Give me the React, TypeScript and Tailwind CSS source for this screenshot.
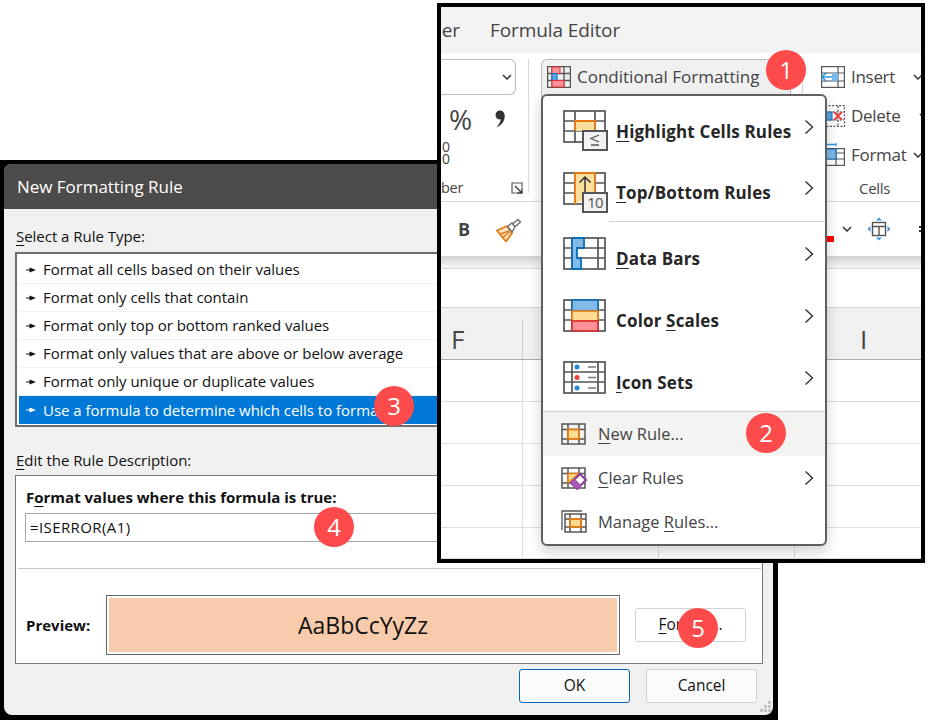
import React from "react";

const GRAY = "#555";

const Key = ({ children }: { children: React.ReactNode }) => (
  <span className="underline decoration-1 underline-offset-[3px]">{children}</span>
);

const Badge = ({ n, className }: { n: number; className: string }) => (
  <div
    className={`absolute flex h-10 w-10 items-center justify-center rounded-full bg-[#fd4a4a] text-[24px] leading-none text-white ${className}`}
  >
    {n}
  </div>
);

const Chevron = () => (
  <svg width="10" height="16" viewBox="0 0 10 16" className="shrink-0">
    <path d="M1.500 1.500 8.500 8 1.500 14.500" fill="none" stroke="#333" strokeWidth="1.400" />
  </svg>
);

const SmallDown = () => (
  <svg width="10" height="6" viewBox="0 0 10 6" className="shrink-0">
    <path d="M1 1 5 5 9 1" fill="none" stroke="#333" strokeWidth="1.500" />
  </svg>
);

const Pointer = ({ light }: { light?: boolean }) => (
  <svg width="10" height="6" viewBox="0 0 10 6" className="mr-[7px] shrink-0">
    <path d="M0 3H5" stroke={light ? "#fff" : "#111"} strokeWidth="1" />
    <path d="M3.500 0.500 10 3 3.500 5.500Z" fill={light ? "#fff" : "#111"} />
  </svg>
);

// 42x32 sheet grid used by the large menu icons
const BigGrid = ({ v = [12, 32], h = [11, 21] }: { v?: number[]; h?: number[] }) => (
  <g fill="none" stroke={GRAY} strokeWidth="1.700">
    <rect x="1" y="1" width="41" height="31" />
    {v.map((x) => (
      <path key={x} d={`M${x} 1V32`} />
    ))}
    {h.map((y) => (
      <path key={y} d={`M1 ${y}H42`} />
    ))}
  </g>
);

const HighlightIcon = () => (
  <svg width="46" height="42" viewBox="0 0 46 42" className="mt-[9px] block">
    <BigGrid />
    <path d="M12 21V11H32V21" fill="#fbdd9c" stroke="#e57a14" strokeWidth="1.800" />
    <rect x="20" y="21" width="24" height="19" fill="#f2f2f2" stroke={GRAY} strokeWidth="2" />
    <path d="M36 25 28 28.500 36 32M28 35H36" fill="none" stroke={GRAY} strokeWidth="1.300" />
  </svg>
);

const TopIcon = () => (
  <svg width="46" height="42" viewBox="0 0 46 42" className="mt-[9px] block">
    <BigGrid />
    <path d="M12 32V1H32V22" fill="#fbdd9c" stroke="#e57a14" strokeWidth="1.800" />
    <path d="M22 21V5M16.500 10.500 22 5 27.500 10.500" fill="none" stroke="#333" strokeWidth="1.500" />
    <rect x="20" y="21" width="24" height="19" fill="#f2f2f2" stroke={GRAY} strokeWidth="2" />
    <text x="32" y="36" textAnchor="middle" fontSize="15" letterSpacing="-0.8" fill="#555" fontFamily="'Open Sans', sans-serif">
      10
    </text>
  </svg>
);

const DataBarsIcon = () => (
  <svg width="46" height="34" viewBox="0 0 46 34" className="block">
    <BigGrid v={[9, 35]} />
    <path d="M9 1H21V11H14V21H18V32H9Z" fill="#82bbea" stroke="#0c6cb5" strokeWidth="1.800" />
  </svg>
);

const ColorScalesIcon = () => (
  <svg width="46" height="34" viewBox="0 0 46 34" className="block">
    <BigGrid v={[9, 35]} />
    <rect x="9" y="1" width="26" height="11" fill="#82bbea" stroke="#0c6cb5" strokeWidth="1.600" />
    <rect x="9" y="12" width="26" height="10" fill="#fbdc92" stroke="#e57a14" strokeWidth="1.600" />
    <rect x="9" y="22" width="26" height="10" fill="#fc919a" stroke="#d92c2c" strokeWidth="1.600" />
  </svg>
);

const IconSetsIcon = () => (
  <svg width="46" height="34" viewBox="0 0 46 34" className="block">
    <BigGrid v={[9, 35]} />
    <circle cx="14" cy="6" r="2.500" fill="#1c8ad8" />
    <circle cx="14" cy="16.500" r="2.500" fill="#f04040" />
    <circle cx="14" cy="27" r="2.500" fill="#1c8ad8" />
    <path d="M25 6H33M25 16.500H33M25 27H33" stroke="#777" strokeWidth="1.400" />
  </svg>
);

const SmallGrid = () => (
  <g fill="none" stroke={GRAY} strokeWidth="1.500">
    <rect x="1" y="1" width="23" height="20" />
    <path d="M7 1V21M18 1V21M1 6.500H24M1 16H24" />
  </g>
);

const NewRuleIcon = () => (
  <svg width="26" height="23" viewBox="0 0 26 23" className="block">
    <SmallGrid />
    <rect x="7" y="6.500" width="11" height="9.500" fill="#fbdc92" stroke="#e57a14" strokeWidth="1.800" />
  </svg>
);

const ClearRulesIcon = () => (
  <svg width="26" height="23" viewBox="0 0 26 23" className="block">
    <SmallGrid />
    <path d="M7 16V6.500H18L7 16Z" fill="#fbdc92" stroke="#e57a14" strokeWidth="1.400" />
    <path d="M10 16 19 7 25 13 16 22Z" fill="#fff" stroke="#8e3a9d" strokeWidth="2" />
    <path d="M10 16 14 12 20 18 16 22Z" fill="#a95ab6" />
  </svg>
);

const ManageRulesIcon = () => (
  <svg width="26" height="24" viewBox="0 0 26 24" className="block">
    <path d="M1 20V1H21" fill="none" stroke={GRAY} strokeWidth="1.300" />
    <g fill="none" stroke={GRAY} strokeWidth="1.500">
      <rect x="4" y="4" width="21" height="18" />
      <path d="M9 4V22M20 4V22M4 9H25M4 17H25" />
    </g>
    <rect x="9" y="9" width="11" height="8" fill="#fbdc92" stroke="#e57a14" strokeWidth="1.800" />
  </svg>
);

const ConditionalIcon = () => (
  <svg width="24" height="22" viewBox="0 0 24 22" className="block shrink-0">
    <g fill="none" stroke={GRAY} strokeWidth="1.300">
      <rect x="0.600" y="0.600" width="22.800" height="20.800" />
      <path d="M5 1V21M17 1V21M1 7.500H23M1 14.500H23" />
    </g>
    <rect x="5" y="1" width="8" height="6.500" fill="#fc919a" stroke="#e03030" strokeWidth="1" />
    <rect x="5" y="7.500" width="5" height="7" fill="#5aa6e6" stroke="#0c6cb5" strokeWidth="1" />
    <rect x="5" y="14.500" width="12" height="6.500" fill="#fc919a" stroke="#e03030" strokeWidth="1" />
  </svg>
);

const InsertIcon = () => (
  <svg width="24" height="22" viewBox="0 0 24 22" className="block shrink-0">
    <g fill="none" stroke={GRAY} strokeWidth="1.200">
      <rect x="0.600" y="0.600" width="22.800" height="20.800" />
      <path d="M17 1V21M1 7H23M1 15H23" />
    </g>
    <rect x="11" y="7" width="6" height="8" fill="#7cb8e8" />
    <path d="M11 11H1.500M5.500 6.500 1 11 5.500 15.500" fill="none" stroke="#2d9ae0" strokeWidth="1.600" />
  </svg>
);

const DeleteIcon = () => (
  <svg width="24" height="22" viewBox="0 0 24 22" className="block shrink-0">
    <g fill="none" stroke={GRAY} strokeWidth="1.200" strokeDasharray="2 1.500">
      <rect x="0.600" y="0.600" width="22.800" height="20.800" />
      <path d="M17 1V21M1 7H23M1 15H23" />
    </g>
    <rect x="3" y="7" width="8" height="8" fill="#5aa6e6" stroke="#0c6cb5" />
    <path d="M13 7 21 15M21 7 13 15" stroke="#f04040" strokeWidth="1.800" />
  </svg>
);

const FormatIcon = () => (
  <svg width="24" height="23" viewBox="0 0 24 23" className="block shrink-0">
    <path d="M1 1.500H15M15 0V3" fill="none" stroke="#2d9ae0" strokeWidth="1.300" />
    <g fill="none" stroke={GRAY} strokeWidth="1.200">
      <rect x="0.600" y="5.600" width="22.800" height="16.800" />
      <path d="M15 5V22M1 10H23M1 16H23" />
    </g>
    <rect x="1" y="6" width="14" height="10" fill="#7cb8e8" stroke="#0c6cb5" />
  </svg>
);

const BrushIcon = () => (
  <svg width="25" height="23" viewBox="0 0 25 23" className="block">
    <path d="M1 11.500 11 7 16 14 10 22.500Z" fill="#fbe3c4" stroke="#e57a14" strokeWidth="1.800" />
    <path d="M4 15 13 12M6.500 19 13.500 13" stroke="#e57a14" strokeWidth="1.400" />
    <path d="M11.500 7.500 16 4 19 8 16 13ZM16.500 5 22 0.500 24.500 3 18.500 8" fill="#fff" stroke="#666" strokeWidth="1.300" />
  </svg>
);

const CommaIcon = () => (
  <svg width="12" height="18" viewBox="0 0 12 18" className="block">
    <circle cx="5" cy="5" r="4.500" fill="#333" />
    <path d="M9.500 5C10.500 10 7 15 1.500 17.500 5 13 6 10.500 6 8Z" fill="#333" />
  </svg>
);

const LauncherIcon = () => (
  <svg width="12" height="12" viewBox="0 0 12 12" className="block">
    <path d="M11 5.500V1H1V11H5.500" fill="none" stroke="#555" strokeWidth="1.200" />
    <path d="M4 4 11 11M11 6V11H6" fill="none" stroke="#333" strokeWidth="1.300" />
  </svg>
);

const BordersIcon = () => (
  <svg width="24" height="24" viewBox="0 0 24 24" className="block">
    <g fill="none" stroke="#555" strokeWidth="1.400">
      <rect x="5.500" y="5.500" width="13" height="13" />
      <path d="M5 9.500H19M12 9.500V18" />
    </g>
    <path d="M12 0.500 9 3.500H15ZM12 23.500 9 20.500H15ZM0.500 12 3.500 9V15ZM23.500 12 20.500 9V15Z" fill="#3d94d8" />
  </svg>
);

const CellRow = ({ icon, label, width }: { icon: React.ReactNode; label: string; width: string }) => (
  <div className="flex h-[39px] items-center gap-[6px]">
    {icon}
    <span className={`shrink-0 ${width}`}>{label}</span>
    <SmallDown />
  </div>
);

const MenuBig = ({ icon, children, first }: { icon: React.ReactNode; children: React.ReactNode; first?: boolean }) => (
  <div className={`flex items-center pl-5 pr-[11px] ${first ? "h-[61px]" : "h-[62px]"}`}>
    <div className="w-[53px] shrink-0">{icon}</div>
    <div className="flex-1 pt-[9px] text-[17px] font-bold leading-none tracking-[0.15px] text-[#262626]">{children}</div>
    <Chevron />
  </div>
);

const MenuSmall = ({
  icon,
  children,
  hover,
  more,
}: {
  icon: React.ReactNode;
  children: React.ReactNode;
  hover?: boolean;
  more?: boolean;
}) => (
  <div className={`flex h-11 items-center pl-[18px] pr-[11px] text-[16.500px] text-[#444] ${hover ? "bg-[#f3f4f2]" : ""}`}>
    <div className="w-[37px] shrink-0">{icon}</div>
    <div className="flex-1 pt-px">{children}</div>
    {more && <Chevron />}
  </div>
);

const ListItem = ({ text, selected }: { text: string; selected?: boolean }) => (
  <div
    className={`flex h-7 items-center whitespace-nowrap pl-[7px] ${
      selected ? "bg-[#0078d7] text-white" : "border-b border-[#f0f0f0]"
    }`}
  >
    <Pointer light={selected} />
    {text}
  </div>
);

const DialogButton = ({ children, primary }: { children: React.ReactNode; primary?: boolean }) => (
  <div
    className={`flex h-[34px] w-[111px] items-center justify-center rounded-[3px] border bg-[#fbfbfb] text-[15.500px] ${
      primary ? "border-[#0067c0]" : "border-[#d0d0d0]"
    }`}
  >
    {children}
  </div>
);

const Dialog = () => (
  <div className="absolute left-0 top-[160px] h-[560px] w-[778px] bg-black pb-[5px] pl-1 pr-[5px] pt-1">
    <div className="flex h-full flex-col overflow-hidden rounded-lg bg-[#f0f0f0] text-[15px] tracking-[-0.03px] text-[#111]">
      <div className="flex h-[45px] shrink-0 items-center bg-[#4d4b49] pl-[13px] text-[17px] text-white">
        New Formatting Rule
      </div>
      <div className="flex flex-1 flex-col pl-[11px] pr-[10px]">
        <div className="mt-[17px] h-5 pl-px leading-5">
          <Key>S</Key>elect a Rule Type:
        </div>
        <div className="mt-[6px] h-[175px] border-2 border-[#6d6d6d] bg-white p-[2px]">
          <ListItem text="Format all cells based on their values" />
          <ListItem text="Format only cells that contain" />
          <ListItem text="Format only top or bottom ranked values" />
          <ListItem text="Format only values that are above or below average" />
          <ListItem text="Format only unique or duplicate values" />
          <ListItem text="Use a formula to determine which cells to format" selected />
        </div>
        <div className="mt-[23px] h-5 pl-px leading-5">
          <Key>E</Key>dit the Rule Description:
        </div>
        <div className="mt-[5px] h-[189px] border border-[#777] bg-white">
          <div className="ml-[10px] mt-[11px] h-5 font-bold leading-5 tracking-normal">
            F<Key>o</Key>rmat values where this formula is true:
          </div>
          <div className="ml-[9px] mr-4 mt-[6px] flex h-[29px] items-center border border-[#a8a8a8] pl-1 tracking-[0.4px]">
            =ISERROR(A1)
          </div>
          <div className="ml-[2px] mr-px mt-[26px] border-t border-[#c8c8c8]" />
          <div className="mt-[26px] flex items-center">
            <div className="w-[90px] pl-[10px] font-bold tracking-normal">Preview:</div>
            <div className="flex h-[60px] w-[514px] items-center justify-center border border-[#666] bg-[#f7cbac] text-[23px] tracking-normal shadow-[inset_0_0_0_2px_#fff]">
              AaBbCcYyZz
            </div>
            <div className="ml-[15px] flex h-[34px] w-[111px] items-center justify-center rounded-[3px] border border-[#d0d0d0] bg-white text-[15.500px]">
              <Key>F</Key>ormat...
            </div>
          </div>
        </div>
        <div className="mt-[5px] flex justify-end gap-4 pr-[6px]">
          <DialogButton primary>OK</DialogButton>
          <DialogButton>Cancel</DialogButton>
        </div>
      </div>
    </div>
    {/* resize grip */}
    <svg width="12" height="12" viewBox="0 0 12 12" className="absolute bottom-[7px] right-[6px]">
      <path d="M8 0h3v3H8zM4 4h3v3H4zM8 4h3v3H8zM0 8h3v3H0zM4 8h3v3H4zM8 8h3v3H8z" fill="#c4c4c4" />
    </svg>
  </div>
);

const ExcelWindow = () => (
  <div className="absolute left-[437px] top-[3px] h-[560px] w-[488px] border-4 border-black bg-white">
    <div className="flex h-full flex-col overflow-hidden text-[#444]">
      {/* tabs */}
      <div className="flex h-[46px] shrink-0 items-center bg-[#f3f3f3] text-[19px] tracking-[-0.1px]">
        <div className="flex w-[19px] justify-end overflow-hidden">
          <span>ber</span>
        </div>
        <span className="ml-[30px]">Formula Editor</span>
      </div>

      {/* ribbon */}
      <div className="flex h-[149px] shrink-0 border-b border-[#d8d8d8] pb-2 pt-[6px] text-[17px]">
        <div className="flex w-[88px] shrink-0 flex-col border-r border-[#d8d8d8] pr-[5px]">
          <div className="flex h-9 w-[75px] shrink-0 items-center justify-end rounded-r-md border border-l-0 border-[#bbb] pr-[3px]">
            <SmallDown />
          </div>
          <div className="mt-[10px] flex h-7 items-center pl-2 text-[28px] leading-none">
            <span>%</span>
            <div className="ml-[23px]">
              <CommaIcon />
            </div>
          </div>
          <div className="mt-[8px] pl-px text-[14px] leading-[12px]">
            0<br />0
          </div>
          <div className="mt-[13px] flex h-5 items-center justify-between text-[14.500px]">
            <span className="tracking-[-0.3px]">ber</span>
            <LauncherIcon />
          </div>
        </div>

        <div className="w-[273px] shrink-0 pl-3">
          <div className="flex h-10 w-[250px] items-start gap-[6px] rounded-t-md border border-b-0 border-[#bbb] bg-[#f0f0f0] pl-[5px] pt-[6px]">
            <ConditionalIcon />
            <span className="leading-[22px]">Conditional Formatting</span>
          </div>
        </div>

        <div className="flex-1 border-l border-[#d8d8d8] pl-[18px] tracking-[-0.3px]">
          <div className="-mt-[2px]">
            <CellRow icon={<InsertIcon />} label="Insert" width="w-[56px]" />
            <CellRow icon={<DeleteIcon />} label="Delete" width="w-[62px]" />
            <CellRow icon={<FormatIcon />} label="Format" width="w-[56px]" />
            <div className="whitespace-nowrap pl-[38px] pt-[4px] text-[15px] leading-5">Cells</div>
          </div>
        </div>
      </div>

      {/* second toolbar row */}
      <div className="flex h-[54px] shrink-0 items-center">
        <span className="ml-[17px] w-[13px] shrink-0 text-[18px] font-bold">B</span>
        <div className="ml-[25px] mt-[2px] shrink-0">
          <BrushIcon />
        </div>
        <div className="mb-[14px] ml-[306px] h-[6px] w-[7px] shrink-0 self-end bg-[#ff0000]" />
        <div className="ml-2 shrink-0">
          <SmallDown />
        </div>
        <div className="ml-[15px] shrink-0">
          <BordersIcon />
        </div>
        <div className="ml-[28px] h-[6px] w-[6px] shrink-0 border-y-2 border-[#333]" />
      </div>

      <div className="h-3 shrink-0 bg-gradient-to-b from-[#d4d4d4] to-[#f7f7f7]" />

      {/* formula bar */}
      <div className="h-10 shrink-0 border-y border-[#d4d4d4]" />

      {/* sheet */}
      <div className="grid flex-1 grid-cols-[82px_136px_136px_126px] grid-rows-[52px_42px_42px_42px_42px_1fr]">
        <div className="border-b border-[#aaa] bg-[#f0f0f0] pt-[11px]">
          <div className="flex h-full items-center border-r border-[#ccc] pl-[10px] text-[26px]">F</div>
        </div>
        <div className="border-b border-[#aaa] bg-[#f0f0f0]" />
        <div className="border-b border-[#aaa] bg-[#f0f0f0]" />
        <div className="flex items-center border-b border-[#aaa] bg-[#f0f0f0] pl-[65px] pt-[11px] text-[26px]">I</div>
        {Array.from({ length: 20 }).map((_, i) => (
          <div key={i} className="border-b border-r border-[#dedede] [&:nth-child(4n)]:border-r-0" />
        ))}
      </div>
    </div>

    {/* dropdown menu */}
    <div className="absolute left-[100px] top-[87px] w-[286px] rounded-md border-2 border-[#5f5f5f] bg-white shadow-[0_6px_14px_rgba(0,0,0,0.18)]">
      <MenuBig icon={<HighlightIcon />} first>
        <Key>H</Key>ighlight Cells Rules
      </MenuBig>
      <MenuBig icon={<TopIcon />}>
        <Key>T</Key>op/Bottom Rules
      </MenuBig>
      <div className="mb-px ml-[66px] h-[3px] border-b border-[#d0d0d0]" />
      <MenuBig icon={<DataBarsIcon />}>
        <Key>D</Key>ata Bars
      </MenuBig>
      <MenuBig icon={<ColorScalesIcon />}>
        Color <Key>S</Key>cales
      </MenuBig>
      <MenuBig icon={<IconSetsIcon />}>
        <Key>I</Key>con Sets
      </MenuBig>
      <div className="h-[3px] border-b border-[#d0d0d0]" />
      <MenuSmall icon={<NewRuleIcon />} hover>
        <Key>N</Key>ew Rule...
      </MenuSmall>
      <MenuSmall icon={<ClearRulesIcon />} more>
        <Key>C</Key>lear Rules
      </MenuSmall>
      <MenuSmall icon={<ManageRulesIcon />}>
        Manage <Key>R</Key>ules...
      </MenuSmall>
    </div>
  </div>
);

export default function App() {
  return (
    <div className="relative h-[720px] w-[932px] overflow-hidden bg-white font-['Open_Sans',sans-serif]">
      <Dialog />
      <ExcelWindow />
      <Badge n={1} className="left-[766px] top-[50px]" />
      <Badge n={2} className="left-[746px] top-[413px]" />
      <Badge n={3} className="left-[374px] top-[386px]" />
      <Badge n={4} className="left-[314px] top-[507px]" />
      <Badge n={5} className="left-[678px] top-[608px]" />
    </div>
  );
}
